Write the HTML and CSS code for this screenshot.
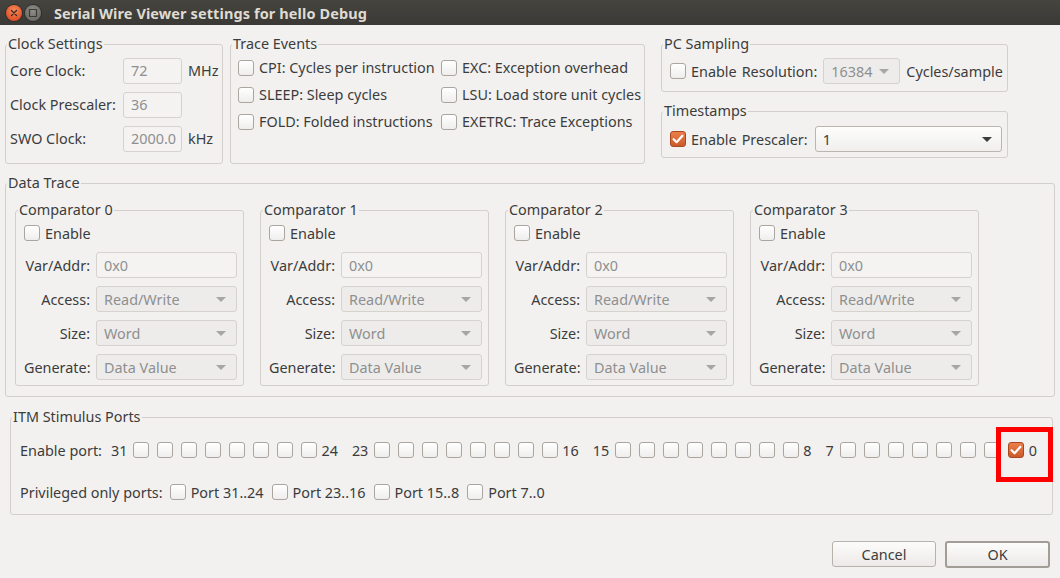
FILE: index.html
```html
<!DOCTYPE html>
<html>
<head>
<meta charset="utf-8">
<link rel="stylesheet" href="styles.css">
</head>
<body>
<div class="window">
  <div class="titlebar">
    <span class="wbtn wbtn-close"><svg width="16" height="16" viewBox="0 0 16 16"><path d="M5.5 5.5 L10.5 10.5 M10.5 5.5 L5.5 10.5" stroke="#3b2a22" stroke-width="1.3" stroke-linecap="round"/></svg></span>
    <span class="wbtn wbtn-max"><svg width="16" height="16" viewBox="0 0 16 16"><rect x="4.5" y="4.5" width="7" height="7" rx="0.5" fill="none" stroke="#3a3935" stroke-width="1.2"/></svg></span>
    <span class="title">Serial Wire Viewer settings for hello Debug</span>
  </div>

  <div class="dialog">
    <div class="top-row">
      <fieldset class="group g-clock">
        <legend class="gtitle">Clock Settings</legend>
        <div class="clock-grid">
          <span class="lbl">Core Clock:</span><span class="input dis">72</span><span class="lbl">MHz</span>
          <span class="lbl">Clock Prescaler:</span><span class="input dis">36</span><span></span>
          <span class="lbl">SWO Clock:</span><span class="input dis">2000.0</span><span class="lbl">kHz</span>
        </div>
      </fieldset>

      <fieldset class="group g-trace">
        <legend class="gtitle">Trace Events</legend>
        <div class="trace-grid">
          <label class="chk"><span class="cb"></span>CPI: Cycles per instruction</label>
          <label class="chk"><span class="cb"></span>EXC: Exception overhead</label>
          <label class="chk"><span class="cb"></span>SLEEP: Sleep cycles</label>
          <label class="chk"><span class="cb"></span>LSU: Load store unit cycles</label>
          <label class="chk"><span class="cb"></span>FOLD: Folded instructions</label>
          <label class="chk"><span class="cb"></span>EXETRC: Trace Exceptions</label>
        </div>
      </fieldset>

      <div class="right-col">
        <fieldset class="group g-pc">
          <legend class="gtitle">PC Sampling</legend>
          <div class="hrow">
            <label class="chk"><span class="cb"></span>Enable</label>
            <span class="lbl lbl-res">Resolution:</span>
            <span class="combo dis c-res">16384<span class="arrow"></span></span>
            <span class="lbl lbl-cyc">Cycles/sample</span>
          </div>
        </fieldset>
        <fieldset class="group g-ts">
          <legend class="gtitle">Timestamps</legend>
          <div class="hrow hrow-ts">
            <label class="chk"><span class="cb on"><svg width="16" height="16" viewBox="0 0 16 16"><path d="M3.6 8.2 L6.6 11.2 L12.4 4.8" fill="none" stroke="#fff" stroke-width="2.2" stroke-linecap="round" stroke-linejoin="round"/></svg></span>Enable</label>
            <span class="lbl lbl-res">Prescaler:</span>
            <span class="combo c-pre">1<span class="arrow"></span></span>
          </div>
        </fieldset>
      </div>
    </div>

    <fieldset class="group g-data">
      <legend class="gtitle">Data Trace</legend>
      <div class="comp-row">
        <fieldset class="group g-comp">
          <legend class="gtitle">Comparator 0</legend>
          <div class="comp-body">
            <label class="chk"><span class="cb"></span>Enable</label>
            <div class="comp-grid">
              <span class="lbl r">Var/Addr:</span><span class="input dis">0x0</span>
              <span class="lbl r">Access:</span><span class="combo dis">Read/Write<span class="arrow"></span></span>
              <span class="lbl r">Size:</span><span class="combo dis">Word<span class="arrow"></span></span>
              <span class="lbl r">Generate:</span><span class="combo dis">Data Value<span class="arrow"></span></span>
            </div>
          </div>
        </fieldset>
        <fieldset class="group g-comp">
          <legend class="gtitle">Comparator 1</legend>
          <div class="comp-body">
            <label class="chk"><span class="cb"></span>Enable</label>
            <div class="comp-grid">
              <span class="lbl r">Var/Addr:</span><span class="input dis">0x0</span>
              <span class="lbl r">Access:</span><span class="combo dis">Read/Write<span class="arrow"></span></span>
              <span class="lbl r">Size:</span><span class="combo dis">Word<span class="arrow"></span></span>
              <span class="lbl r">Generate:</span><span class="combo dis">Data Value<span class="arrow"></span></span>
            </div>
          </div>
        </fieldset>
        <fieldset class="group g-comp">
          <legend class="gtitle">Comparator 2</legend>
          <div class="comp-body">
            <label class="chk"><span class="cb"></span>Enable</label>
            <div class="comp-grid">
              <span class="lbl r">Var/Addr:</span><span class="input dis">0x0</span>
              <span class="lbl r">Access:</span><span class="combo dis">Read/Write<span class="arrow"></span></span>
              <span class="lbl r">Size:</span><span class="combo dis">Word<span class="arrow"></span></span>
              <span class="lbl r">Generate:</span><span class="combo dis">Data Value<span class="arrow"></span></span>
            </div>
          </div>
        </fieldset>
        <fieldset class="group g-comp">
          <legend class="gtitle">Comparator 3</legend>
          <div class="comp-body">
            <label class="chk"><span class="cb"></span>Enable</label>
            <div class="comp-grid">
              <span class="lbl r">Var/Addr:</span><span class="input dis">0x0</span>
              <span class="lbl r">Access:</span><span class="combo dis">Read/Write<span class="arrow"></span></span>
              <span class="lbl r">Size:</span><span class="combo dis">Word<span class="arrow"></span></span>
              <span class="lbl r">Generate:</span><span class="combo dis">Data Value<span class="arrow"></span></span>
            </div>
          </div>
        </fieldset>
      </div>
    </fieldset>

    <fieldset class="group g-itm">
      <legend class="gtitle">ITM Stimulus Ports</legend>
      <div class="itm-body">
        <div class="port-row">
          <span class="lbl port-lbl">Enable port:</span>
          <span class="pgroup"><span class="num">31</span><span class="cb"></span><span class="cb"></span><span class="cb"></span><span class="cb"></span><span class="cb"></span><span class="cb"></span><span class="cb"></span><span class="cb"></span><span class="num">24</span></span>
          <span class="pgroup"><span class="num">23</span><span class="cb"></span><span class="cb"></span><span class="cb"></span><span class="cb"></span><span class="cb"></span><span class="cb"></span><span class="cb"></span><span class="cb"></span><span class="num">16</span></span>
          <span class="pgroup"><span class="num">15</span><span class="cb"></span><span class="cb"></span><span class="cb"></span><span class="cb"></span><span class="cb"></span><span class="cb"></span><span class="cb"></span><span class="cb"></span><span class="num">8</span></span>
          <span class="pgroup"><span class="num">7</span><span class="cb"></span><span class="cb"></span><span class="cb"></span><span class="cb"></span><span class="cb"></span><span class="cb"></span><span class="cb"></span><span class="hl"><span class="cb on"><svg width="16" height="16" viewBox="0 0 16 16"><path d="M3.6 8.2 L6.6 11.2 L12.4 4.8" fill="none" stroke="#fff" stroke-width="2.2" stroke-linecap="round" stroke-linejoin="round"/></svg></span><span class="num hl-num">0</span></span></span>
        </div>
        <div class="priv-row">
          <span class="lbl">Privileged only ports:</span>
          <label class="chk"><span class="cb"></span>Port 31..24</label>
          <label class="chk"><span class="cb"></span>Port 23..16</label>
          <label class="chk"><span class="cb"></span>Port 15..8</label>
          <label class="chk"><span class="cb"></span>Port 7..0</label>
        </div>
      </div>
    </fieldset>

    <div class="buttons">
      <button class="btn">Cancel</button>
      <button class="btn btn-default">OK</button>
    </div>
  </div>
</div>
</body>
</html>
```

FILE: styles.css
```css
* { box-sizing: border-box; }
html, body { margin: 0; padding: 0; }
body {
  background: #f2f1f0;
  font-family: "Noto Sans", "Open Sans", sans-serif;
  font-size: 14.4px;
  color: #3c3c3c;
  width: 1060px;
  height: 578px;
  overflow: hidden;
}
.window { width: 1060px; }

.titlebar {
  height: 25px;
  background: linear-gradient(#45443f, #3a3935);
  display: flex;
  align-items: center;
  padding-left: 6px;
}
.wbtn {
  width: 16px; height: 16px; border-radius: 50%;
  display: inline-flex; align-items: center; justify-content: center;
  margin-top: 1px;
}
.wbtn-close {
  background: radial-gradient(circle at 50% 35%, #f58a5c, #e0542c 70%, #b8411f);
  box-shadow: 0 0 0 1px #2f2e2a;
}
.wbtn-max {
  margin-left: 3px;
  background: radial-gradient(circle at 50% 35%, #8e8d88, #6f6e69 70%, #5b5a55);
  box-shadow: 0 0 0 1px #2f2e2a;
}
.title {
  margin-left: 13px;
  color: #dfdbd2;
  font-weight: bold;
  font-size: 14.5px;
  letter-spacing: 0.1px;
}

.dialog { padding: 10px 0 0 5px; }

.group {
  margin: 0;
  padding: 0;
  border: 1px solid #d3cfca;
  border-radius: 3px;
  min-width: 0;
}
.gtitle {
  padding: 0 1px;
  margin-left: 1px;
  line-height: 18px;
  font-size: 14.4px;
}

.lbl { white-space: nowrap; }
.r { text-align: right; }

/* top row */
.top-row { display: flex; align-items: flex-start; }
.g-clock { width: 218px; height: 129px; }
.g-trace { width: 415px; height: 129px; margin-left: 7px; }
.right-col { width: 347px; margin-left: 16px; display: flex; flex-direction: column; gap: 10px; }

.clock-grid {
  display: grid;
  grid-template-columns: 107px 59px auto;
  column-gap: 6px;
  row-gap: 8.5px;
  grid-auto-rows: 25.5px;
  align-items: center;
  padding: 5px 0 0 4px;
}

.input {
  height: 100%;
  display: flex; align-items: center;
  border: 1px solid #d6d2cd;
  border-radius: 3px;
  background: #f4f3f2;
  padding: 0 7px;
  color: #8f8f8f;
  white-space: nowrap;
  overflow: hidden;
}

.trace-grid {
  display: grid;
  grid-template-columns: 203px auto;
  grid-auto-rows: 18px;
  row-gap: 9px;
  padding: 5.5px 0 0 7px;
}

.chk { display: inline-flex; align-items: center; white-space: nowrap; height: 18px; }
.chk .cb { margin-right: 5px; }

.cb {
  width: 16px; height: 16px;
  flex: none;
  border: 1px solid #aaa59f;
  border-radius: 3px;
  background: linear-gradient(#ffffff, #efeeed);
  display: inline-block;
}
.cb svg { display: block; margin: -1px; }
.cb.on {
  border-color: #a8481f;
  background: linear-gradient(#ec7f4a, #cb5a2a);
}

.g-pc { height: 57px; }
.g-ts { height: 56px; }
.hrow {
  display: flex; align-items: center;
  padding: 5px 0 0 8px;
  height: 31px;
}
.hrow-ts { padding-top: 6px; height: 32px; }
.lbl-res { margin-left: 5px; }
.combo {
  position: relative;
  height: 26px;
  display: flex; align-items: center;
  border: 1px solid #d6d2cd;
  border-radius: 3px;
  background: #edeceb;
  padding: 0 7px;
  color: #8f8f8f;
  white-space: nowrap;
}
.combo .arrow {
  position: absolute;
  right: 10px; top: 50%;
  margin-top: -2px;
  width: 0; height: 0;
  border-left: 5px solid transparent;
  border-right: 5px solid transparent;
  border-top: 5px solid #a6a6a6;
}
.c-res { width: 77px; margin-left: 6px; }
.lbl-cyc { margin-left: 6px; }
.c-pre {
  width: 187px; margin-left: 7px;
  background: linear-gradient(#fdfdfc, #f0efee);
  border-color: #bab5af;
  color: #3c3c3c;
}
.c-pre .arrow { border-top-color: #3c3c3c; right: 9px; }

/* data trace */
.g-data { width: 1050px; height: 223px; margin-top: 10px; }
.comp-row { display: flex; gap: 16px; padding: 9px 0 0 9px; }
.g-comp { width: 229px; height: 185px; }
.g-comp .gtitle { margin-left: 2px; }
.comp-body { padding: 5px 0 0 8px; }
.comp-grid {
  margin-top: 7px;
  display: grid;
  grid-template-columns: 66px 141px;
  column-gap: 6px;
  row-gap: 8px;
  grid-auto-rows: 26px;
  align-items: center;
}
.comp-grid .combo, .comp-grid .input { height: 26px; }

/* ITM */
.g-itm { width: 1043px; height: 107px; margin: 11px 0 0 5px; position: relative; }
.itm-body { padding: 15px 0 0 9px; }
.port-row { display: flex; align-items: center; height: 18px; }
.port-lbl { margin-right: 9px; }
.pgroup { display: inline-flex; align-items: center; gap: 8px; margin-right: 14px; }
.pgroup > .num:first-child { margin-right: -2px; }
.pgroup > .num:last-child { margin-left: -4px; }
.hl { position: relative; display: inline-flex; align-items: center; gap: 5px; }
.hl .hl-num { margin-left: 0; }
.hl::after {
  content: "";
  position: absolute;
  left: -12px; top: -14px;
  width: 47px; height: 45px;
  border: 5px solid #ff0000;
}
.priv-row { display: flex; align-items: center; height: 18px; margin-top: 24px; gap: 8px; }
.priv-row > .lbl { margin-right: -1px; }

/* buttons */
.buttons {
  display: flex; justify-content: flex-end; gap: 9px;
  padding: 26px 10px 0 0;
}
.btn {
  font-family: "Noto Sans", "Open Sans", sans-serif;
  font-size: 14.4px;
  color: #3c3c3c;
  width: 104px; height: 26px;
  border: 1px solid #b7b2ac;
  border-radius: 3px;
  background: linear-gradient(#fcfcfb, #eceae8);
  padding: 0;
}
.btn-default {
  width: 105px; height: 27px;
  border: 2px solid #a29d97;
}
```
